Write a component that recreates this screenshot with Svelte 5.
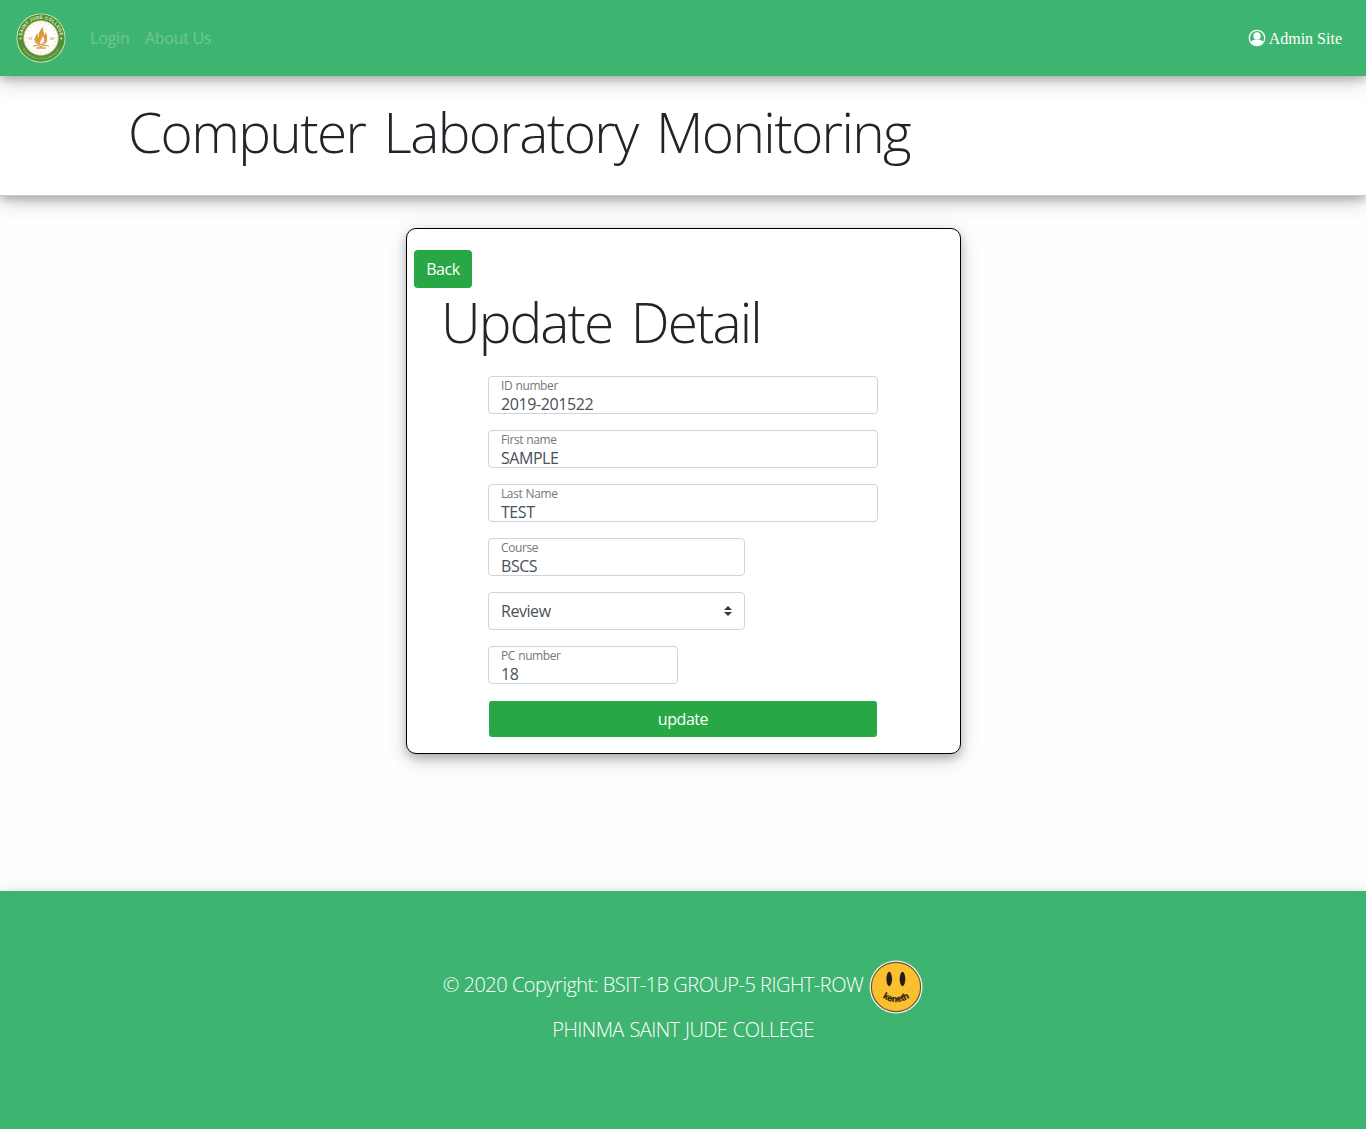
<script>
  const names = [
    { label: 'ID number', value: '2019-201522', size: 'full', ls: 'digits' },
    { label: 'First name', value: 'SAMPLE', size: 'full', ls: 'caps' },
    { label: 'Last Name', value: 'TEST', size: 'full', ls: 'caps' },
    { label: 'Course', value: 'BSCS', size: 'medium', ls: 'caps' }
  ];
  const ticks = Array.from({ length: 24 }, (_, i) => i * 15);
</script>

<nav>
  <svg class="logo" viewBox="0 0 50 50" width="50" height="50">
    <defs>
      <path id="arc-top" d="M6.200 29a19.200 19.200 0 1 1 37.600 0" />
      <path id="arc-bottom" d="M3.300 25a21.700 21.700 0 0 0 43.400 0" />
    </defs>
    <circle cx="25" cy="25" r="24.5" fill="#e6ecc2" />
    <circle cx="25" cy="25" r="23.7" fill="#4b9138" />
    <circle cx="25" cy="25" r="17.3" fill="#fff" stroke="#d9bd79" stroke-width=".8" />
    {#each ticks as angle}
      <path d="M25 9.2v2" stroke="#e7c48b" stroke-width=".6" transform="rotate({angle} 25 25)" />
    {/each}
    <text class="seal top" font-size="4.600" fill="#e9edc9"><textPath href="#arc-top" startOffset="50%" text-anchor="middle">SAINT JUDE COLLEGE</textPath></text>
    <text class="seal" font-size="2.900" fill="#9dbb68"><textPath href="#arc-bottom" startOffset="50%" text-anchor="middle">PHINMA EDUCATION NETWORK</textPath></text>
    <circle cx="4.6" cy="25.5" r="1" fill="#e9edc9" />
    <circle cx="45.4" cy="25.5" r="1" fill="#e9edc9" />
    <path d="M24 31c-7-3-5.500-8-2-11-.5 3-.5 4 .8 4.600C22 20 24 17 27.500 13.500 26 18 29 19 28 22.500c1-.7 1.500-2 1.300-3.500 3 4 3 10-3.300 12 3-3 3-5 .5-8-.2 3-2.500 4-2.500 8z" fill="#dd9838" />
    <path d="M18.500 26c1 4 4 5.500 6.500 5.500s5-1.500 6-5M17 33.500c3-1.500 6-1.300 8 .3 2-1.600 5-1.800 8-.3M20 35h10" fill="none" stroke="#dba14d" stroke-width="1.300" />
    <text class="seal" x="12.300" y="27" font-size="3.500" fill="#d9ac68">19</text>
    <text class="seal" x="34" y="27" font-size="3.500" fill="#d9ac68">68</text>
  </svg>
  <a class="login" href="#login">Login</a>
  <a class="about" href="#about">About Us</a>
  <a class="admin" href="#admin">
    <svg viewBox="0 0 18 18" width="18" height="18">
      <circle cx="9" cy="9" r="7.700" fill="none" stroke="#fff" stroke-width="1.300" />
      <circle cx="9" cy="7" r="3.700" fill="#fff" />
      <path d="M3 13C4 11 6 10.600 7 10.500c1.300.7 2.700.7 4 0 1 .1 3 .5 4 2.500-1.500 2.300-3.500 3.500-6 3.500S4.500 15.300 3 13z" fill="#fff" />
    </svg>
    <span>Admin Site</span>
  </a>
</nav>

<header><h1>Computer Laboratory Monitoring</h1></header>

<main>
  <section class="card">
    <button class="back">Back</button>
    <h2>Update Detail</h2>
    <form>
      {#each names as field}
        <label class="field {field.size}">
          <span class="caption">{field.label}</span>
          <span class="value {field.ls}">{field.value}</span>
        </label>
      {/each}
      <div class="select">
        <span>Review</span>
        <svg viewBox="0 0 4 5" width="8" height="10"><path fill="#343a40" d="M2 0L0 2h4zm0 5L0 3h4z" /></svg>
      </div>
      <label class="field small">
        <span class="caption">PC number</span>
        <span class="value digits">18</span>
      </label>
      <button class="update" type="button">update</button>
    </form>
  </section>
</main>

<footer>
  <div class="copyright">
    <span>© 2020 Copyright: BSIT-1B GROUP-5 RIGHT-ROW</span>
    <svg viewBox="0 0 54 54" width="54" height="54">
      <defs><path id="smile" d="M9 34.500Q27 49.500 45 34.500" /></defs>
      <circle cx="27" cy="27" r="26.500" fill="#f1f0e8" />
      <circle cx="27" cy="27" r="24.600" fill="#fbc02d" stroke="#6d5636" stroke-width="1.200" />
      <ellipse cx="20.200" cy="19" rx="2.800" ry="7.200" fill="#221d1b" />
      <ellipse cx="33.500" cy="19" rx="2.800" ry="7.200" fill="#221d1b" />
      <text class="smile" font-size="9" fill="#2a2115" stroke="#2a2115" stroke-width=".3"><textPath href="#smile" startOffset="50%" text-anchor="middle">keneth</textPath></text>
    </svg>
  </div>
  <div class="college">PHINMA SAINT JUDE COLLEGE</div>
</footer>

<style>
  :global(body) {
    margin: 0;
    background: #fefefe;
    color: #212529;
    font: 16px/24px 'Open Sans', 'Noto Sans', sans-serif;
  }
  nav, header, footer, .card {
    box-sizing: border-box;
    box-shadow: 0 4px 8px rgba(0, 0, 0, .2), 0 6px 20px rgba(0, 0, 0, .19);
  }
  nav {
    position: relative;
    z-index: 1;
    height: 76px;
    display: flex;
    align-items: center;
    padding: 0 24px 0 16px;
    background: #3eb471;
  }
  .seal { font-family: 'Liberation Sans', sans-serif; font-weight: 700; }
  .top { letter-spacing: .25px; }
  a { text-decoration: none; white-space: nowrap; }
  .login, .about { color: #6fc78f; }
  .login { margin-left: 24px; width: 55px; letter-spacing: -.2px; }
  .about { letter-spacing: -.3px; }
  .admin {
    margin-left: auto;
    display: flex;
    align-items: center;
    gap: 3px;
    color: #fff;
    font-family: 'Liberation Serif', serif;
  }
  .admin span { padding-top: 2px; }
  header {
    height: 120px;
    padding: 22px 0 0 128px;
    background: #fff;
    border-bottom: 1px solid #ccc;
  }
  h1, h2 {
    margin: 0;
    font-size: 55px;
    line-height: 67px;
    font-weight: 300;
    white-space: nowrap;
  }
  h1 { letter-spacing: -1.6px; word-spacing: 5.5px; }
  main { height: 695px; padding-top: 32px; box-sizing: border-box; }
  .card {
    width: 555px;
    height: 526px;
    margin: 0 auto;
    padding: 21px 7px 0;
    border: 1px solid #000;
    border-radius: 10px;
    background: #fff;
    position: relative;
    left: .5px;
  }
  button {
    display: block;
    border: 0;
    color: #fff;
    background: #28a745;
    font: 16px/24px 'Open Sans', 'Noto Sans', sans-serif;
  }
  .back { width: 58px; height: 38px; padding: 0; border-radius: 4px; letter-spacing: -.4px; }
  h2 { margin: 0 0 21px 27px; letter-spacing: -1.9px; word-spacing: 6px; }
  form { margin-left: 74px; display: flex; flex-direction: column; align-items: flex-start; gap: 16px; }
  .field, .select {
    box-sizing: border-box;
    height: 38px;
    border: 1px solid #ced4da;
    border-radius: 4px;
    padding: 0 12px;
    color: #495057;
  }
  .field { display: flex; flex-direction: column; }
  .full { width: 390px; }
  .medium, .select { width: 257px; }
  .small { width: 190px; }
  .caption { height: 18px; font-size: 12px; line-height: 18px; color: #777; letter-spacing: -.4px; word-spacing: .5px; }
  .value { line-height: 18px; }
  .caps { letter-spacing: -.45px; }
  .digits { letter-spacing: -.4px; }
  .select { display: flex; align-items: center; justify-content: space-between; letter-spacing: -.45px; }
  .update { width: 388px; height: 36px; margin: 1px 0 0 1px; border-radius: 3px; letter-spacing: -.45px; }
  footer {
    height: 238px;
    padding-top: 69px;
    display: flex;
    flex-direction: column;
    align-items: center;
    background: #3eb471;
    color: #fff;
    font-size: 20px;
    font-weight: 300;
  }
  .copyright { display: flex; align-items: center; gap: 6px; height: 54px; }
  .copyright span { margin-top: -4px; letter-spacing: -.5px; white-space: nowrap; }
  .college { margin-top: 4px; line-height: 24px; letter-spacing: -.57px; word-spacing: 1px; }
  .smile { font-family: 'Liberation Sans', sans-serif; font-weight: 700; }
</style>
